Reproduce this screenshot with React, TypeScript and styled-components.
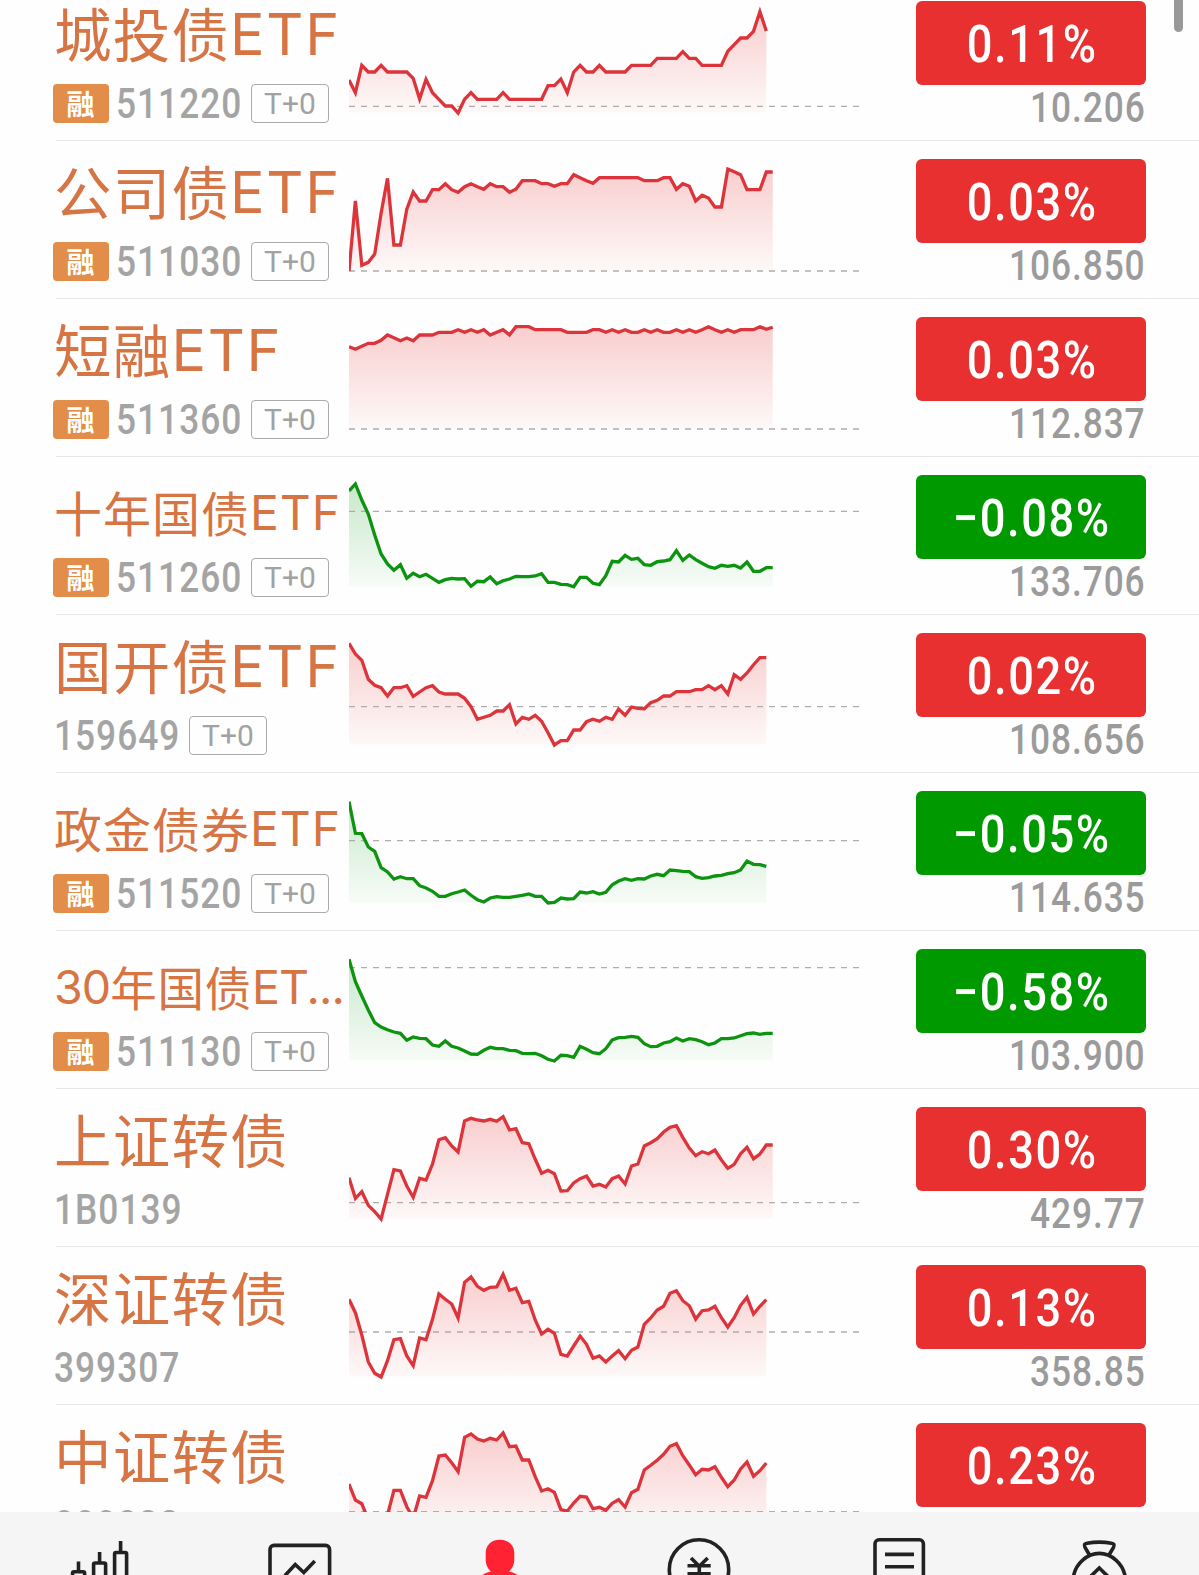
import React from "react";
import styled, { createGlobalStyle } from "styled-components";

const RED = "#e93030";
const GREEN = "#009900";
const LINE_RED = "#dc343a";
const LINE_GREEN = "#0c930f";

const GlobalStyle = createGlobalStyle`
  * { box-sizing: border-box; }
  html, body { margin: 0; padding: 0; background: #fefefe; }
`;

const Screen = styled.div`
  position: relative;
  display: flex;
  flex-direction: column;
  width: 1199px;
  height: 1575px;
  overflow: hidden;
  background: #fefefe;
  font-family: Roboto, "Noto Sans CJK SC", sans-serif;
`;

const ListViewport = styled.main`
  height: 1512px;
  flex: none;
  overflow: hidden;
`;

const List = styled.div`
  display: flex;
  flex-direction: column;
  margin-top: -17px;
`;

const Row = styled.div`
  display: flex;
  flex: none;
  height: 157px;
  padding-left: 53px;
`;

const Divider = styled.div`
  flex: none;
  height: 1px;
  margin-left: 56px;
  background: #e6e6e6;
`;

const Info = styled.div`
  flex: none;
  width: 296px;
`;

const Name = styled.div<{ $size: number; $spacing: number }>`
  height: 101px;
  padding-left: 1px;
  font-family: "Noto Sans CJK SC", sans-serif;
  font-size: ${(p) => p.$size}px;
  line-height: ${(p) => 2 * (75 - 0.436 * p.$size)}px;
  letter-spacing: ${(p) => p.$spacing}px;
  white-space: nowrap;
  color: #d67444;
`;

const Latin = styled.span<{ $spacing: number }>`
  font-family: Inter, sans-serif;
  line-height: 0;
  letter-spacing: ${(p) => p.$spacing}px;
  vertical-align: 2px;
`;

const Meta = styled.div<{ $badge: boolean }>`
  display: flex;
  height: 39px;
  padding-left: ${(p) => (p.$badge ? 0 : 1)}px;
`;

const MarginBadge = styled.span`
  width: 56px;
  height: 39px;
  margin-right: 7px;
  padding-right: 1px;
  border-radius: 4px;
  background: #e28d49;
  color: #fff;
  font: 700 28px/38px "Noto Sans CJK SC", sans-serif;
  text-align: center;
`;

const Code = styled.span`
  width: 135px;
  font-size: 42px;
  font-weight: 500;
  line-height: 39px;
  color: #a4a4a4;
`;

const Narrow = styled.span<{ $scale: number; $spacing: number; $origin: string }>`
  display: inline-block;
  white-space: nowrap;
  letter-spacing: ${(p) => p.$spacing}px;
  transform: scaleX(${(p) => p.$scale});
  transform-origin: ${(p) => p.$origin} center;
`;

const TradeTag = styled.span`
  width: 78px;
  height: 39px;
  border: 1px solid #aaa;
  border-radius: 4px;
  color: #a2a2a2;
  font-size: 30px;
  line-height: 38px;
  text-align: center;
`;

const ChartSvg = styled.svg`
  display: block;
  flex: none;
  width: 510px;
  height: 157px;
`;

const Quote = styled.div`
  flex: none;
  width: 230px;
  margin-left: 57px;
  padding-top: 18px;
`;

const Change = styled.div<{ $down: boolean }>`
  height: 84px;
  padding: 2px 0 0 2px;
  border-radius: 6px;
  background: ${(p) => (p.$down ? GREEN : RED)};
  color: #fff;
  font-size: 52px;
  font-weight: 500;
  line-height: 83px;
  text-align: center;
`;

const Price = styled.div`
  font-size: 42px;
  font-weight: 500;
  line-height: 45px;
  text-align: right;
  color: #9b9b9b;
`;

const ScrollThumb = styled.div`
  position: absolute;
  top: -40px;
  right: 16px;
  width: 9px;
  height: 72px;
  border-radius: 5px;
  background: #999;
`;

const TabBar = styled.nav`
  display: grid;
  grid-template-columns: repeat(6, 1fr);
  flex: none;
  height: 63px;
  background: #f5f5f5;
`;

const Tab = styled.div`
  display: flex;
  justify-content: center;
`;

const TabIcon = styled.svg`
  width: 70px;
  height: 63px;
  fill: none;
  stroke: #222;
  stroke-width: 3.6;
`;

type Security = {
  name: string;
  size?: number;
  spacing?: number;
  latinSpacing?: number;
  code: string;
  badge?: boolean;
  t0?: boolean;
  change: string;
  price?: string;
  /* Level of the row's upper edge on the scale the samples use, 3 units per pixel. */
  top: number;
  base: number;
  points: number[];
};

const securities: Security[] = [
  {
    name: "城投债ETF", code: "511220", badge: true, t0: true, change: "0.11%", price: "10.206",
    top: -51, base: 319,
    points: [240, 278, 196, 216, 216, 196, 216, 216, 216, 216, 235, 297, 238, 278, 298, 318, 318, 339, 298, 278, 298, 298, 298, 298, 278, 298, 298, 298, 298, 298, 298, 257, 257, 237, 278, 216, 196, 216, 216, 196, 216, 216, 216, 216, 196, 196, 196, 196, 175, 175, 175, 175, 155, 175, 175, 196, 196, 196, 196, 154, 134, 114, 114, 94, 35, 93],
  },
  {
    name: "公司债ETF", code: "511030", badge: true, t0: true, change: "0.03%", price: "106.850",
    top: 423, base: 813,
    points: [813, 603, 796, 787, 762, 640, 535, 735, 735, 628, 576, 603, 603, 569, 569, 551, 569, 577, 560, 551, 560, 568, 551, 560, 560, 577, 568, 542, 542, 542, 551, 551, 559, 551, 551, 524, 533, 542, 550, 533, 533, 533, 533, 533, 533, 533, 542, 542, 542, 533, 533, 568, 551, 559, 603, 586, 594, 621, 621, 507, 515, 524, 569, 569, 569, 516, 516],
  },
  {
    name: "短融ETF", code: "511360", badge: true, t0: true, change: "0.03%", price: "112.837",
    top: 27, base: 417,
    points: [170, 178, 169, 160, 160, 151, 135, 143, 152, 144, 152, 135, 135, 135, 127, 127, 127, 119, 127, 119, 127, 119, 135, 127, 119, 135, 110, 110, 110, 119, 119, 119, 119, 119, 127, 127, 127, 127, 119, 119, 127, 119, 127, 119, 127, 127, 119, 127, 119, 127, 127, 119, 127, 119, 127, 119, 110, 119, 127, 119, 127, 119, 119, 119, 110, 118, 112],
  },
  {
    name: "十年国债ETF", size: 48, spacing: 1, latinSpacing: 1, code: "511260", badge: true, t0: true, change: "−0.08%", price: "133.706",
    top: 501, base: 664,
    points: [603, 582, 630, 672, 735, 792, 822, 841, 824, 865, 850, 860, 853, 865, 877, 869, 865, 867, 866, 889, 874, 875, 861, 881, 872, 867, 859, 860, 860, 858, 851, 877, 877, 883, 884, 890, 862, 862, 880, 884, 857, 814, 816, 796, 808, 805, 824, 826, 815, 813, 809, 782, 811, 795, 809, 820, 830, 835, 826, 829, 826, 834, 816, 844, 844, 833, 833],
  },
  {
    name: "国开债ETF", code: "159649", t0: true, change: "0.02%", price: "108.656",
    top: -15, base: 260,
    points: [70, 102, 121, 178, 196, 203, 228, 203, 203, 197, 229, 216, 203, 197, 216, 222, 222, 222, 235, 260, 298, 292, 286, 273, 273, 254, 312, 292, 298, 286, 304, 338, 375, 362, 362, 330, 330, 305, 298, 304, 292, 298, 267, 286, 261, 265, 266, 248, 241, 228, 228, 215, 215, 215, 209, 209, 197, 209, 197, 222, 164, 178, 159, 134, 113, 113],
  },
  {
    name: "政金债券ETF", size: 48, spacing: 1, latinSpacing: 1, code: "511520", badge: true, t0: true, change: "−0.05%", price: "114.635",
    top: 459, base: 662,
    points: [545, 640, 641, 681, 694, 743, 756, 777, 770, 776, 776, 797, 804, 814, 829, 829, 821, 816, 810, 826, 839, 846, 834, 830, 832, 832, 829, 826, 822, 829, 829, 849, 847, 834, 837, 836, 816, 819, 815, 822, 817, 794, 783, 776, 781, 776, 777, 768, 763, 767, 750, 752, 754, 755, 770, 775, 773, 768, 766, 761, 758, 750, 723, 733, 734, 739],
  },
  {
    name: "30年国债ET...", size: 46.5, spacing: 0.7, latinSpacing: -0.9, code: "511130", badge: true, t0: true, change: "−0.58%", price: "103.900",
    top: 3, base: 113,
    points: [88, 155, 198, 240, 278, 291, 299, 306, 310, 331, 321, 325, 326, 345, 349, 333, 349, 354, 363, 372, 373, 361, 352, 356, 356, 361, 362, 370, 371, 370, 377, 388, 393, 376, 377, 382, 349, 358, 368, 371, 356, 330, 323, 322, 319, 322, 341, 350, 349, 339, 335, 324, 333, 326, 329, 335, 344, 339, 326, 326, 324, 317, 311, 309, 313, 310, 310],
  },
  {
    name: "上证转债", code: "1B0139", change: "0.30%", price: "429.77",
    top: 477, base: 818,
    points: [743, 805, 785, 826, 845, 867, 793, 719, 723, 768, 802, 745, 750, 702, 629, 623, 648, 666, 573, 565, 570, 573, 568, 574, 560, 600, 596, 638, 641, 688, 730, 721, 731, 783, 782, 759, 746, 738, 768, 763, 771, 746, 738, 762, 708, 702, 648, 638, 626, 606, 592, 587, 622, 654, 677, 665, 671, 660, 690, 715, 703, 671, 652, 686, 672, 645, 645],
  },
  {
    name: "深证转债", code: "399307", change: "0.13%", price: "358.85",
    top: 21, base: 276,
    points: [178, 218, 285, 366, 400, 411, 362, 299, 296, 348, 377, 294, 299, 238, 162, 178, 192, 234, 127, 111, 139, 151, 142, 141, 103, 151, 145, 188, 184, 240, 282, 268, 280, 343, 348, 318, 288, 313, 355, 348, 366, 348, 332, 356, 331, 321, 253, 234, 210, 199, 160, 152, 182, 197, 237, 212, 210, 199, 233, 261, 233, 196, 172, 222, 199, 179],
  },
  {
    name: "中证转债", code: "000832", change: "0.23%",
    top: 495, base: 815,
    points: [732, 780, 791, 840, 870, 885, 825, 751, 751, 800, 835, 768, 772, 722, 648, 645, 668, 695, 592, 582, 597, 603, 595, 600, 579, 620, 618, 660, 660, 710, 753, 746, 757, 809, 813, 789, 769, 771, 806, 802, 811, 790, 779, 801, 758, 748, 690, 676, 661, 643, 619, 611, 647, 675, 704, 688, 690, 680, 712, 740, 720, 687, 666, 709, 692, 669],
  },
];

const STEP = 6.42;
const FLOOR = 129.5;

function Sparkline({ item, down }: { item: Security; down: boolean }) {
  const y = (v: number) => (v - item.top) / 3;
  const line = item.points.map((v, i) => `${(i * STEP).toFixed(1)},${y(v).toFixed(1)}`).join(" ");
  const lastX = ((item.points.length - 1) * STEP).toFixed(1);
  const id = `area-${item.code}`;
  const baseY = y(item.base);
  const fill = down ? "#1fa628" : "#ea3a3a";
  return (
    <ChartSvg viewBox="0 0 510 157">
      <defs>
        <linearGradient id={id} gradientUnits="userSpaceOnUse" x1="0" y1="26" x2="0" y2={FLOOR}>
          <stop offset="0" stopColor={fill} stopOpacity="0.25" />
          <stop offset="1" stopColor={fill} stopOpacity="0.03" />
        </linearGradient>
      </defs>
      <polygon points={`0,${FLOOR} ${line} ${lastX},${FLOOR}`} fill={`url(#${id})`} />
      <line x1="0" x2="510" y1={baseY} y2={baseY} stroke="#aeacac" strokeWidth="1.3" strokeDasharray="6 6" />
      <polyline points={line} fill="none" stroke={down ? LINE_GREEN : LINE_RED} strokeWidth="3.3" />
    </ChartSvg>
  );
}

function SecurityName({ text, latinSpacing }: { text: string; latinSpacing: number }) {
  return (
    <>
      {text.split(/([A-Z0-9.]+)/).filter(Boolean).map((part, i) =>
        /^[A-Z0-9.]/.test(part) ? <Latin key={i} $spacing={latinSpacing}>{part}</Latin> : part
      )}
    </>
  );
}

function SecurityRow({ item }: { item: Security }) {
  const down = item.change.startsWith("−");
  return (
    <>
      <Row>
        <Info>
          <Name $size={item.size ?? 57.5} $spacing={item.spacing ?? 1.2}>
            <SecurityName text={item.name} latinSpacing={item.latinSpacing ?? 1.7} />
          </Name>
          <Meta $badge={!!item.badge}>
            {item.badge && <MarginBadge>融</MarginBadge>}
            <Code>
              <Narrow $scale={0.84} $spacing={1.2} $origin="left">{item.code}</Narrow>
            </Code>
            {item.t0 && <TradeTag>T+0</TradeTag>}
          </Meta>
        </Info>
        <Sparkline item={item} down={down} />
        <Quote>
          <Change $down={down}>
            <Narrow $scale={0.87} $spacing={1.8} $origin="center">{item.change}</Narrow>
          </Change>
          {item.price && (
            <Price>
              <Narrow $scale={0.84} $spacing={1.1} $origin="right">{item.price}</Narrow>
            </Price>
          )}
        </Quote>
      </Row>
      <Divider />
    </>
  );
}

export default function App() {
  return (
    <>
      <GlobalStyle />
      <Screen>
        <ListViewport>
          <List>
            {securities.map((s) => <SecurityRow key={s.code} item={s} />)}
          </List>
        </ListViewport>
        <TabBar>
          <Tab>
            <TabIcon viewBox="-35 0 70 63">
              <path d="M-21.5 49.5V59M-.4 40V50M20.6 29V40" />
              <rect x="-27.4" y="59.8" width="12" height="30" rx="1.5" />
              <rect x="-6.4" y="51" width="12" height="40" rx="1.5" />
              <rect x="14.6" y="40.5" width="12" height="50" rx="1.5" />
            </TabIcon>
          </Tab>
          <Tab>
            <TabIcon viewBox="-35 0 70 63">
              <rect x="-30" y="33.4" width="59.6" height="60" rx="4" />
              <path d="M-15 63.5L-4.8 52.5L3.8 60.5L14.8 49" />
            </TabIcon>
          </Tab>
          <Tab>
            <TabIcon viewBox="-35 0 70 63">
              <path d="M0 27.7C9.5 27.7 14.3 34 14.3 41V47C14.3 53 12 57 9 59.5C13 60.5 18 62.5 22 66H-22C-18 62.5-13 60.5-9 59.5C-12 57-14.3 53-14.3 47V41C-14.3 34-9.5 27.7 0 27.7Z" fill="#ff2233" stroke="none" />
            </TabIcon>
          </Tab>
          <Tab>
            <TabIcon viewBox="-35 0 70 63">
              <circle cx="0" cy="57.5" r="29.7" />
              <path d="M-8 46L.3 54.3L8.7 46M-11.5 53.7H11.7M-11.5 61.7H11.7M.3 53V72" />
            </TabIcon>
          </Tab>
          <Tab>
            <TabIcon viewBox="-35 0 70 63">
              <rect x="-24" y="27.8" width="48.4" height="70" rx="4" />
              <path d="M-14 42.4H15M-14 54.7H15" />
            </TabIcon>
          </Tab>
          <Tab>
            <TabIcon viewBox="-35 0 70 63">
              <path d="M-9.5 43L-14 35.5C-15.5 32.5-14 31.6-12 31.3Q.3 29 12.5 31.3C14.5 31.6 16 32.5 14.5 35.5L10 43" />
              <path d="M-25.8 66C-24 51 -11 41.4 .3 41.4S24.6 51 26.4 66" />
              <path d="M-8.5 64.5L.3 56L9 64.5" />
            </TabIcon>
          </Tab>
        </TabBar>
        <ScrollThumb />
      </Screen>
    </>
  );
}
